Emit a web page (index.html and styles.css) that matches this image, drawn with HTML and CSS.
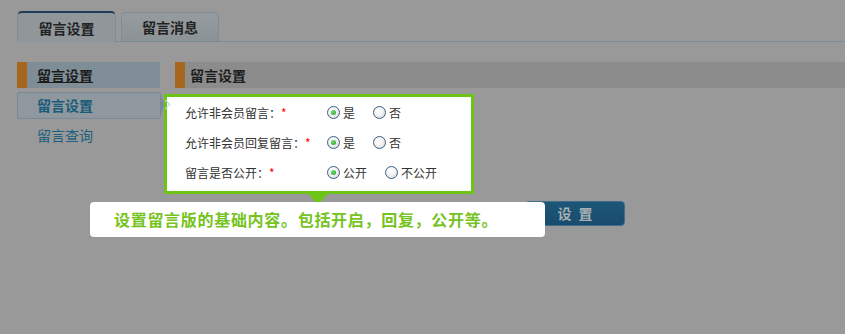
FILE: index.html
```html
<!DOCTYPE html>
<html lang="zh-CN">
<head>
<meta charset="utf-8">
<title>留言设置</title>
<link rel="stylesheet" href="styles.css">
</head>
<body>
<div class="tabs">
  <div class="tab active">留言设置</div>
  <div class="tab">留言消息</div>
</div>
<div class="layout">
  <aside class="side">
    <div class="side-head"><span>留言设置</span></div>
    <ul class="side-menu">
      <li class="current">留言设置</li>
      <li>留言查询</li>
    </ul>
  </aside>
  <main class="main">
    <div class="main-head">留言设置</div>
    <div class="spot">
      <div class="row">
        <div class="lbl">允许非会员留言<span class="colon">：</span><span class="req">*</span></div>
        <label class="opt"><span class="radio checked"></span>是</label>
        <label class="opt"><span class="radio"></span>否</label>
      </div>
      <div class="row">
        <div class="lbl">允许非会员回复留言<span class="colon">：</span><span class="req">*</span></div>
        <label class="opt"><span class="radio checked"></span>是</label>
        <label class="opt"><span class="radio"></span>否</label>
      </div>
      <div class="row">
        <div class="lbl">留言是否公开<span class="colon">：</span><span class="req">*</span></div>
        <label class="opt"><span class="radio checked"></span>公开</label>
        <label class="opt"><span class="radio"></span>不公开</label>
      </div>
    </div>
    <div class="actions"><button class="btn" type="button">设 置</button></div>
  </main>
</div>
<div class="tip">设置留言版的基础内容。包括开启，回复，公开等。</div>
</body>
</html>
```

FILE: styles.css
```css
html, body {
  margin: 0;
  padding: 0;
}
body {
  background: #999999;
  font-family: "Noto Sans CJK SC", "DejaVu Sans", sans-serif;
  width: 845px;
  height: 334px;
  overflow: hidden;
  position: relative;
}

/* tabs */
.tabs {
  display: flex;
  align-items: flex-end;
  margin-left: 17px;
  padding-top: 11px;
  height: 30px;
  border-bottom: 1px solid #7b8a94;
}
.tab {
  box-sizing: border-box;
  display: flex;
  align-items: center;
  justify-content: center;
  font-size: 14px;
  font-weight: bold;
  color: #222;
  border: 1px solid #7d8c96;
  border-bottom: none;
  border-radius: 5px 5px 0 0;
  background: linear-gradient(#959b9e, #8c9397);
  width: 98px;
  height: 29px;
  margin-left: 5px;
}
.tab.active {
  width: 99px;
  height: 31px;
  margin-left: 0;
  margin-bottom: -1px;
  border-top: 2px solid #1e3b58;
  background: #90969a;
  position: relative;
}

/* layout */
.layout {
  display: flex;
  margin-top: 20px;
}
.side {
  width: 143px;
  margin-left: 17px;
}
.side-head {
  height: 26px;
  line-height: 26px;
  border-left: 10px solid #a6661d;
  background: #7f8e96;
  padding-left: 10px;
  font-size: 14px;
  font-weight: bold;
  color: #1b1b1b;
}
.side-head span {
  text-decoration: underline;
}
.side-menu {
  list-style: none;
  margin: 4px 0 0;
  padding: 0;
}
.side-menu li {
  font-size: 14px;
  color: #1f5f80;
  padding-left: 20px;
  line-height: 32px;
  height: 32px;
}
.side-menu li.current {
  box-sizing: border-box;
  height: 27px;
  line-height: 25px;
  padding-left: 19px;
  border: 1px solid #778a98;
  border-right: none;
  border-radius: 3px 0 0 3px;
  background: #8f989e;
  color: #1a5b7a;
  font-weight: bold;
  position: relative;
}
.side-menu li.current::after {
  content: "";
  position: absolute;
  right: -4px;
  top: -1px;
  width: 0;
  height: 0;
  border-top: 13.5px solid transparent;
  border-bottom: 13.5px solid transparent;
  border-left: 4px solid #778a98;
}
.side-menu li.current::before {
  content: "";
  position: absolute;
  right: -9px;
  top: 8px;
  width: 6px;
  height: 6px;
  border-top: 1px solid #b8d6ec;
  border-right: 1px solid #b8d6ec;
  transform: rotate(45deg);
  z-index: 3;
}

.main {
  flex: 1;
  margin-left: 15px;
}
.main-head {
  height: 26px;
  line-height: 26px;
  border-left: 10px solid #a6661d;
  background: #8c8c8c;
  padding-left: 5px;
  font-size: 14px;
  font-weight: bold;
  color: #1d1d1d;
}

/* highlighted form */
.spot {
  position: relative;
  z-index: 2;
  box-sizing: border-box;
  width: 310px;
  margin: 6px 0 0 -11px;
  border: 3px solid #6cc516;
  background: #fff;
  padding: 0 0 4px 18px;
}
.spot::after {
  content: "";
  position: absolute;
  left: 139px;
  top: 100%;
  width: 0;
  height: 0;
  border-left: 12px solid transparent;
  border-right: 12px solid transparent;
  border-top: 14px solid #6cc516;
}
.row {
  display: flex;
  align-items: center;
  height: 30px;
  font-size: 12px;
  color: #333;
}
.lbl {
  width: 142px;
  white-space: nowrap;
}
.colon {
  font-family: "Noto Sans CJK TC", "Noto Sans CJK SC", sans-serif;
}
.req {
  color: #f00;
}
.opt {
  display: flex;
  align-items: center;
  margin-right: 18px;
}
.radio {
  box-sizing: border-box;
  width: 13px;
  height: 13px;
  border-radius: 50%;
  border: 1px solid #3b5f80;
  background: radial-gradient(circle at 40% 35%, #ffffff 0%, #f2f2f2 45%, #cfd3d6 100%);
  margin-right: 3px;
  display: flex;
  align-items: center;
  justify-content: center;
}
.radio.checked::after {
  content: "";
  width: 5px;
  height: 5px;
  border-radius: 50%;
  background: radial-gradient(circle at 40% 35%, #6fe06a, #1f9a2a);
}

.actions {
  margin-top: 6px;
  padding-left: 350px;
}
.btn {
  box-sizing: border-box;
  width: 100px;
  height: 25px;
  padding: 0;
  border: 1px solid #3f6d8c;
  border-radius: 4px;
  background: linear-gradient(#1d5678, #184c6c);
  color: #a9b0b5;
  font-family: "Noto Sans CJK SC", sans-serif;
  font-size: 14px;
  font-weight: bold;
  letter-spacing: 2px;
  text-indent: 2px;
}

/* tooltip */
.tip {
  position: absolute;
  left: 90px;
  top: 202px;
  width: 455px;
  height: 35px;
  box-sizing: border-box;
  background: #fff;
  border-radius: 4px;
  padding-left: 24px;
  line-height: 35px;
  color: #76c322;
  font-size: 16px;
  font-weight: bold;
  letter-spacing: 0.7px;
  white-space: nowrap;
  z-index: 4;
}
```
